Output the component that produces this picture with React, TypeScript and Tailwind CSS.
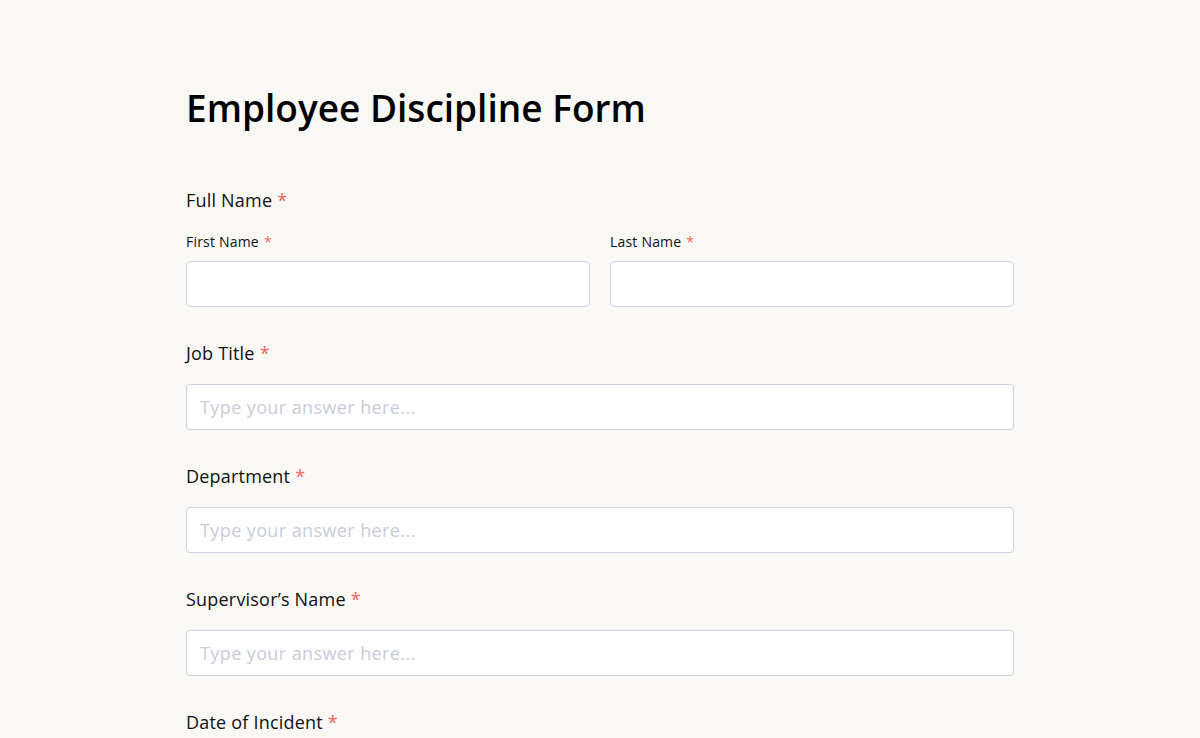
import React from "react";

const font = { fontFamily: '"Open Sans", "Noto Sans", sans-serif' };

function Star() {
  return <span className="text-[#f2665f] ml-[5px]">*</span>;
}

function Field({ label }: { label: string }) {
  return (
    <div className="flex flex-col mb-[34px]">
      <label className="text-[18px] leading-[24px] text-[#111] tracking-[0.2px]">
        {label}
        <Star />
      </label>
      <input
        className="mt-[19px] h-[46px] w-full rounded-[4px] border border-[#cfd2df] bg-white px-[13px] text-[18px] tracking-[0.4px] placeholder:text-[#c9ccd9] outline-none"
        placeholder="Type your answer here..."
        style={font}
      />
    </div>
  );
}

export default function App() {
  return (
    <div className="min-h-[738px] bg-[#f9f8f5]" style={font}>
      <div className="mx-auto w-[828px] pt-[84px]">
        <h1 className="text-[37px] leading-[48px] font-semibold text-black mb-[56px]">
          Employee Discipline Form
        </h1>
        <div className="flex flex-col mb-[34px]">
          <label className="text-[18px] leading-[24px] text-[#111] tracking-[0.2px]">
            Full Name
            <Star />
          </label>
          <div className="mt-[20px] grid grid-cols-2 gap-[20px]">
            <div className="flex flex-col">
              <label className="text-[14px] leading-[20px] text-[#111] tracking-[0.2px]">
                First Name
                <Star />
              </label>
              <input className="mt-[9px] h-[46px] w-full rounded-[4px] border border-[#cfd2df] bg-white px-[13px] outline-none" />
            </div>
            <div className="flex flex-col">
              <label className="text-[14px] leading-[20px] text-[#111] tracking-[0.2px]">
                Last Name
                <Star />
              </label>
              <input className="mt-[9px] h-[46px] w-full rounded-[4px] border border-[#cfd2df] bg-white px-[13px] outline-none" />
            </div>
          </div>
        </div>
        <Field label="Job Title" />
        <Field label="Department" />
        <Field label="Supervisor’s Name" />
        <Field label="Date of Incident" />
      </div>
    </div>
  );
}
